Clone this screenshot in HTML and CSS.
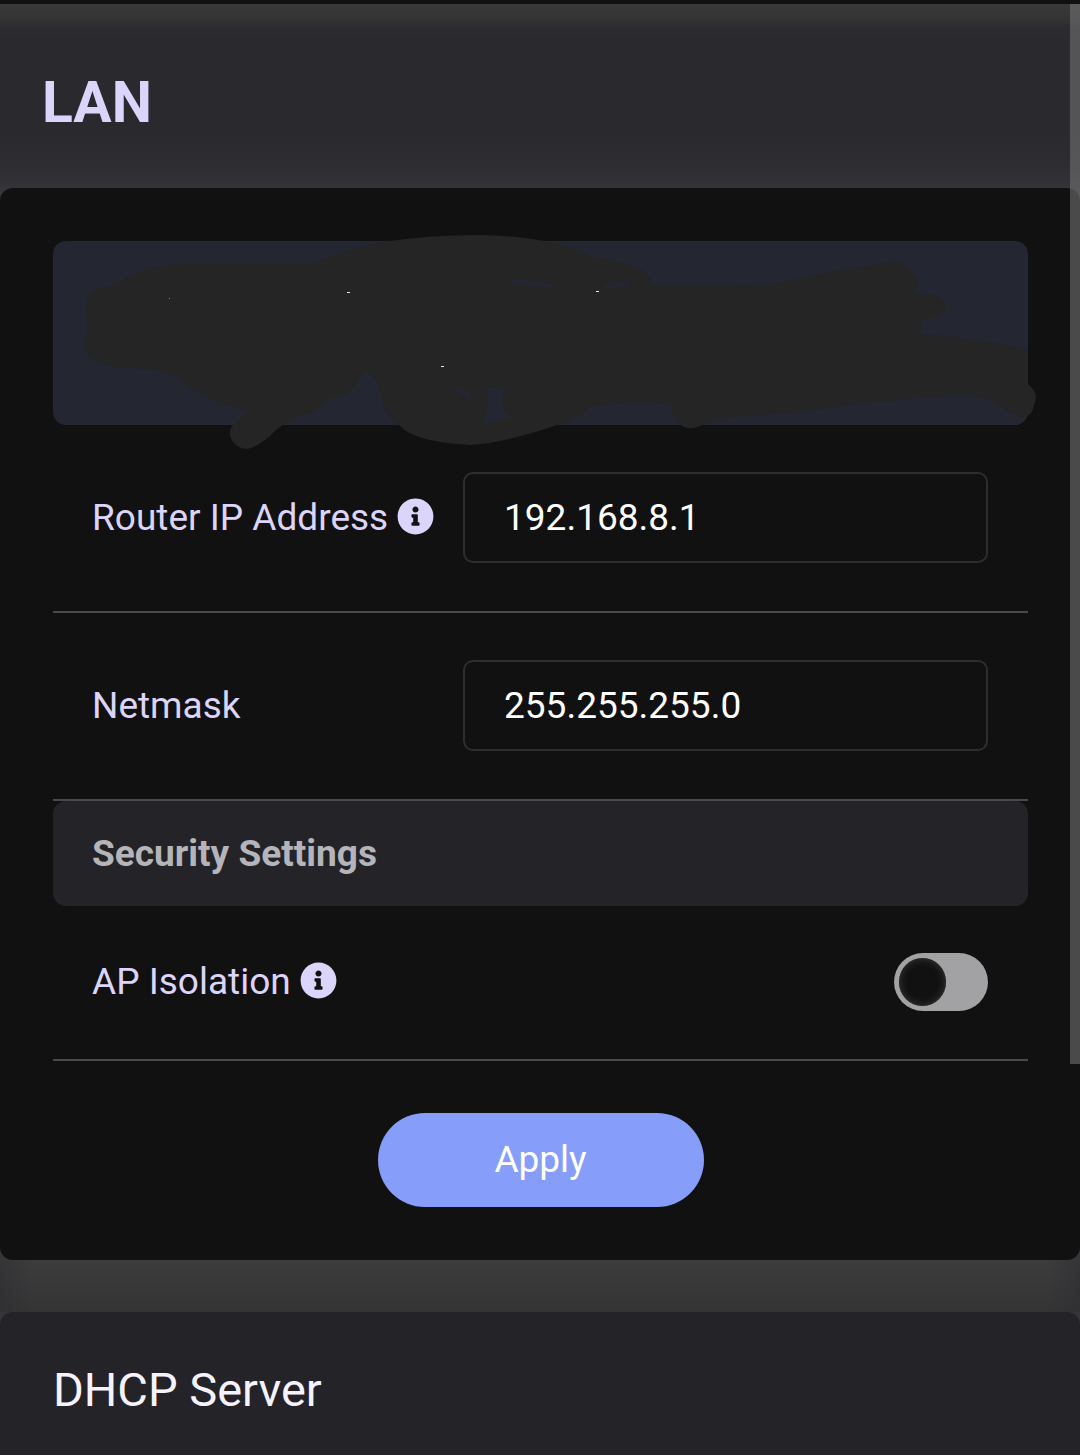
FILE: index.html
```html
<!DOCTYPE html>
<html lang="en">
<head>
    <meta charset="UTF-8">
    <meta name="viewport" content="width=device-width, initial-scale=1.0">
    <title>LAN</title>
    <link rel="stylesheet" href="styles.css">
</head>
<body>
    <!-- Page title -->
    <header class="page-header">
        <h1>LAN</h1>
    </header>

    <main>
        <!-- LAN settings -->
        <form class="card">
            <div class="notice">
                <svg class="scribble" viewBox="53 241 975 184" preserveAspectRatio="none" aria-hidden="true">
                    <path fill="#252525" fill-rule="evenodd" d="M85 300Q92 290 110 286Q142 267 175 264L310 264C335 255 360 245 390 241Q430 235 480 235Q530 236 565 246L592 257Q650 264 653 285L720 285Q750 286 775 284L840 270L880 264Q897 258 904 265Q921 277 918 285L914 293Q940 292 947 305Q945 318 922 320L920 334Q980 338 1028 350L1028 384Q1040 394 1034 405Q1032 417 1022 417Q1010 415 1000 405Q985 395 960 395Q880 400 800 412L730 417Q705 423 700 426Q685 432 678 422Q672 410 671 404Q630 401 590 407Q578 419 560 424Q505 443 470 445Q415 442 400 426Q384 415 382 400Q380 380 368 372Q361 371 357 382Q352 397 330 397Q320 412 300 416Q283 422 270 436Q257 447 247 449C232 448 224 432 235 423Q247 414 246 411Q220 404 200 394L172 375Q160 369 130 368Q86 366 83 345L87 333ZM488 388L504 387Q499 412 511 417L483 424Q488 405 488 388ZM508 281Q530 277 558 287Q530 289 508 281ZM600 287Q615 279 632 285Q617 291 600 287ZM455 389L470 392L472 399Q460 396 455 389Z"/>
                    <path stroke="#e8e8f0" stroke-width="1" d="M347 292.500h3M596 291.500h3M441 366.500h3"/>
                    <path stroke="#888" stroke-width="1" d="M169 298.500h1"/>
                </svg>
            </div>

            <div class="row">
                <label for="routerIp">Router IP Address
                    <svg class="info" viewBox="0 0 512 512" aria-hidden="true"><path d="M256 8C119 8 8 119 8 256s111 248 248 248 248-111 248-248S393 8 256 8zm0 110c23.200 0 42 18.800 42 42s-18.800 42-42 42-42-18.800-42-42 18.800-42 42-42zm56 254c0 6.600-5.400 12-12 12h-88c-6.600 0-12-5.400-12-12v-24c0-6.600 5.400-12 12-12h12v-64h-12c-6.600 0-12-5.400-12-12v-24c0-6.600 5.400-12 12-12h64c6.600 0 12 5.400 12 12v100h12c6.600 0 12 5.400 12 12v24z"/></svg>
                </label>
                <input type="text" id="routerIp" value="192.168.8.1">
            </div>

            <div class="row">
                <label for="netmask">Netmask</label>
                <input type="text" id="netmask" value="255.255.255.0">
            </div>

            <h2>Security Settings</h2>

            <div class="row">
                <label for="apIsolation">AP Isolation
                    <svg class="info" viewBox="0 0 512 512" aria-hidden="true"><path d="M256 8C119 8 8 119 8 256s111 248 248 248 248-111 248-248S393 8 256 8zm0 110c23.200 0 42 18.800 42 42s-18.800 42-42 42-42-18.800-42-42 18.800-42 42-42zm56 254c0 6.600-5.400 12-12 12h-88c-6.600 0-12-5.400-12-12v-24c0-6.600 5.400-12 12-12h12v-64h-12c-6.600 0-12-5.400-12-12v-24c0-6.600 5.400-12 12-12h64c6.600 0 12 5.400 12 12v100h12c6.600 0 12 5.400 12 12v24z"/></svg>
                </label>
                <input type="checkbox" id="apIsolation" class="switch">
            </div>

            <button type="submit" class="btn-apply">Apply</button>
        </form>

        <!-- DHCP settings -->
        <section class="card dhcp">
            <h2>DHCP Server</h2>
        </section>
    </main>

    <div class="scroll-thumb"></div>
</body>
</html>
```

FILE: styles.css
```css
* {
    box-sizing: border-box;
}

html {
    scrollbar-width: none;
}

body {
    margin: 0;
    border-top: 4px solid #111;
    background-color: #2a292e;
    color: #dcd5fb;
    font-family: Roboto, sans-serif;
    font-size: 37px;
    line-height: 44px;
}

/* Page title */
.page-header {
    height: 184px;
    padding: 0 42px;
    display: flex;
    align-items: center;
    background: linear-gradient(#393939, #353536 12px, #2c2b2f 24px, #2a292d 40px, #2a292d 130px, #2e2d31 164px, #343438);
}

h1 {
    margin: 0;
    padding-top: 14px;
    font-size: 57px;
    line-height: 68px;
}

/* Cards */
main {
    display: flex;
    flex-direction: column;
    gap: 52px;
    background:
        linear-gradient(90deg, rgba(42, 41, 46, 0.4), transparent 32px, transparent calc(100% - 32px), rgba(42, 41, 46, 0.4)) 0 1072px / 100% 52px no-repeat,
        linear-gradient(#3c3c3d, #343435) 0 1072px / 100% 52px no-repeat,
        #363639;
}

.card {
    padding: 53px 52px 53px 53px;
    border-radius: 13px;
    background-color: #111;
}

.notice {
    position: relative;
    height: 184px;
    border-radius: 13px;
    background-color: #242631;
}

.scribble {
    position: absolute;
    inset: 0;
    width: 100%;
    height: 100%;
    overflow: visible;
}

/* Setting rows */
.row {
    display: flex;
    align-items: center;
    justify-content: space-between;
    padding: 47px 40px 48px 39px;
    border-bottom: 2px solid #4a4a4b;
}

.row label {
    flex: 0 0 371px;
    white-space: nowrap;
}

.info {
    width: 37px;
    height: 37px;
    vertical-align: -5px;
    fill: #dcd5fb;
}

.row input[type="text"] {
    flex: 1;
    min-width: 0;
    height: 91px;
    padding: 0 39px;
    border: 2px solid #2e2e2f;
    border-radius: 10px;
    background-color: #111;
    color: #fff;
    font: inherit;
}

.card h2 {
    margin: 0;
    padding: 30px 39px;
    border-radius: 13px;
    background-color: #242328;
    color: #b5b4b8;
    font-size: 37px;
    line-height: 45px;
}

.switch {
    appearance: none;
    width: 94px;
    height: 58px;
    margin: 0;
    padding: 5px;
    border-radius: 29px;
    background-color: #a2a2a4;
}

.switch::before {
    content: "";
    display: block;
    width: 47px;
    height: 48px;
    border-radius: 50%;
    background-color: #111;
    box-shadow: inset 0 0 8px #3c3c3d;
}

.switch:checked {
    background-color: #869dfa;
}

.switch:checked::before {
    margin-left: auto;
}

.btn-apply {
    display: block;
    width: 326px;
    height: 94px;
    margin: 52px auto 0;
    border: none;
    border-radius: 47px;
    background-color: #869dfa;
    color: #fff;
    font: inherit;
    cursor: pointer;
}

/* DHCP settings */
.dhcp {
    background-color: #242328;
}

.dhcp h2 {
    padding: 0;
    color: #f6f3ff;
    font-size: 47px;
    font-weight: normal;
    line-height: 50px;
}

/* Thin scrollbar drawn over the page */
.scroll-thumb {
    position: fixed;
    top: 4px;
    right: 0;
    width: 10px;
    height: calc(73vh - 2px);
    background-color: rgba(114, 114, 115, 0.6);
    pointer-events: none;
}
```
